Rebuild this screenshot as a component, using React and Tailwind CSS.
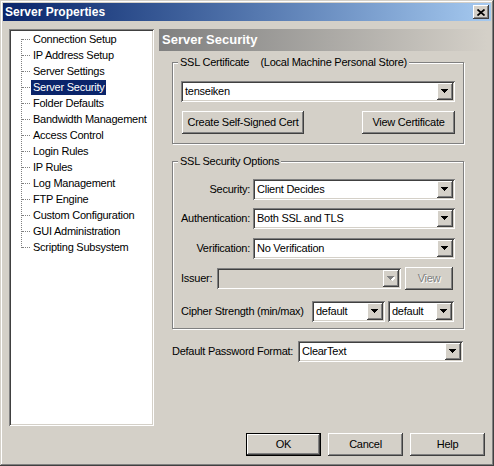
import React from 'react';

const raised = 'shadow-[inset_-1px_-1px_#404040,inset_1px_1px_#ffffff,inset_-2px_-2px_#808080,inset_2px_2px_#d4d0c8]';
const sunken = 'shadow-[inset_1px_1px_#808080,inset_-1px_-1px_#ffffff,inset_2px_2px_#404040,inset_-2px_-2px_#d4d0c8]';
const etched = 'border border-[#808080] shadow-[1px_1px_#ffffff,inset_1px_1px_#ffffff]';

const treeItems = [
  'Connection Setup',
  'IP Address Setup',
  'Server Settings',
  'Server Security',
  'Folder Defaults',
  'Bandwidth Management',
  'Access Control',
  'Login Rules',
  'IP Rules',
  'Log Management',
  'FTP Engine',
  'Custom Configuration',
  'GUI Administration',
  'Scripting Subsystem',
];

const Arrow = ({ disabled }) => (
  <svg width="8" height="5" viewBox="0 0 8 5" shapeRendering="crispEdges">
    {disabled && <path d="M2 1h7v1h-1v1h-1v1h-1v1h-1v-1h-1v-1h-1v-1h-1z" fill="#ffffff" />}
    <path d="M0 0h7v1h-1v1h-1v1h-1v1h-1v-1h-1v-1h-1v-1h-1z" fill={disabled ? '#808080' : '#000000'} />
  </svg>
);

const Combo = ({ value, className, disabled }) => (
  <div className={`flex h-[21px] p-[2px] ${sunken} ${disabled ? 'bg-[#d4d0c8]' : 'bg-white'} ${className}`}>
    <div className="flex-1 pl-[2px] text-[11px] leading-[17px] whitespace-nowrap overflow-hidden">{value}</div>
    <div className={`w-[16px] h-[17px] flex items-center justify-center bg-[#d4d0c8] ${raised}`}>
      <Arrow disabled={disabled} />
    </div>
  </div>
);

const Button = ({ children, className, disabled }) => (
  <div
    className={`h-[23px] flex items-center justify-center bg-[#d4d0c8] text-[11px] ${raised} ${
      disabled ? 'text-[#808080] [text-shadow:1px_1px_0_#ffffff]' : 'text-black'
    } ${className}`}
  >
    {children}
  </div>
);

const Group = ({ title, className, children }) => (
  <div className={`relative ${etched} ${className}`}>
    <span className="absolute -top-[8px] left-[5px] px-[2px] bg-[#d4d0c8] text-[11px] leading-[14px] whitespace-pre">
      {title}
    </span>
    {children}
  </div>
);

export default function App() {
  return (
    <div
      className="w-[494px] h-[466px] p-[3px] bg-[#d4d0c8] text-black tracking-[-0.25px] shadow-[inset_-1px_-1px_#404040,inset_1px_1px_#d4d0c8,inset_-2px_-2px_#808080,inset_2px_2px_#ffffff] overflow-hidden"
      style={{ fontFamily: '"Liberation Sans", Arial, sans-serif' }}
    >
      {/* Title bar */}
      <div className="h-[18px] flex items-center justify-between pl-[2px] pr-[2px] bg-gradient-to-r from-[#0a246a] to-[#a6caf0]">
        <span className="text-white font-bold text-[12px] leading-none tracking-normal">Server Properties</span>
        <div className={`w-[16px] h-[14px] flex items-center justify-center bg-[#d4d0c8] ${raised}`}>
          <svg width="8" height="7" viewBox="0 0 8 7">
            <path d="M0.5 0.5L7.5 6.5M7.5 0.5L0.5 6.5" stroke="#000" strokeWidth="1.7" />
          </svg>
        </div>
      </div>

      <div className="flex pl-[6px] pt-[8px] gap-[5px]">
        {/* Tree */}
        <div className={`relative w-[145px] h-[397px] bg-white ${sunken}`}>
          <div className="absolute left-[12px] top-[10px] h-[209px] border-l border-dotted border-[#808080]" />
          <div className="pt-[2px]">
            {treeItems.map((item) => (
              <div key={item} className="flex items-center h-[16px]">
                <div className="ml-[13px] w-[8px] border-t border-dotted border-[#808080]" />
                <span
                  className={`ml-[1px] px-[2px] text-[11px] leading-[15px] whitespace-nowrap ${
                    item === 'Server Security' ? 'bg-[#0a246a] text-white' : ''
                  }`}
                >
                  {item}
                </span>
              </div>
            ))}
          </div>
        </div>

        {/* Right panel */}
        <div className="w-[328px]">
          <div className="h-[22px] pl-[3px] bg-gradient-to-r from-[#808080] to-[#d4d0c8] text-white font-bold text-[13px] leading-[22px] tracking-normal">
            Server Security
          </div>

          <Group title={'SSL Certificate    (Local Machine Personal Store)'} className="ml-[13px] mt-[11px] w-[292px] h-[82px]">
            <div className="pl-[8px] pt-[18px]">
              <Combo value="tenseiken" className="w-[274px]" />
              <div className="flex justify-between w-[274px] mt-[9px]">
                <Button className="ml-[1px] w-[122px]">Create Self-Signed Cert</Button>
                <Button className="w-[93px]">View Certificate</Button>
              </div>
            </div>
          </Group>

          <Group title="SSL Security Options" className="ml-[13px] mt-[17px] w-[292px] h-[168px]">
            <div className="pt-[17px] text-[11px]">
              <div className="flex items-center">
                <span className="w-[80px] pr-[3px] text-right">Security:</span>
                <Combo value="Client Decides" className="w-[202px]" />
              </div>
              <div className="flex items-center mt-[8px]">
                <span className="w-[80px] pr-[3px] text-right">Authentication:</span>
                <Combo value="Both SSL and TLS" className="w-[202px]" />
              </div>
              <div className="flex items-center mt-[9px]">
                <span className="w-[80px] pr-[3px] text-right">Verification:</span>
                <Combo value="No Verification" className="w-[202px]" />
              </div>
              <div className="flex items-center mt-[8px] pl-[8px]">
                <span className="w-[36px]">Issuer:</span>
                <Combo value="" disabled className="w-[184px]" />
                <Button disabled className="ml-[4px] w-[48px] h-[22px]">View</Button>
              </div>
              <div className="flex items-center mt-[11px] pl-[8px]">
                <span className="w-[131px] whitespace-nowrap">Cipher Strength (min/max)</span>
                <Combo value="default" className="w-[73px]" />
                <Combo value="default" className="ml-[3px] w-[66px]" />
              </div>
            </div>
          </Group>

          <div className="flex items-center ml-[13px] mt-[12px] text-[11px]">
            <span className="w-[126px] whitespace-nowrap">Default Password Format:</span>
            <Combo value="ClearText" className="w-[165px]" />
          </div>
        </div>
      </div>

      {/* Dialog buttons */}
      <div className="flex justify-end gap-[7px] pr-[6px] mt-[7px]">
        <div className="w-[75px] h-[23px] border border-black">
          <Button className="w-full h-full">OK</Button>
        </div>
        <Button className="w-[75px]">Cancel</Button>
        <Button className="w-[75px]">Help</Button>
      </div>
    </div>
  );
}
